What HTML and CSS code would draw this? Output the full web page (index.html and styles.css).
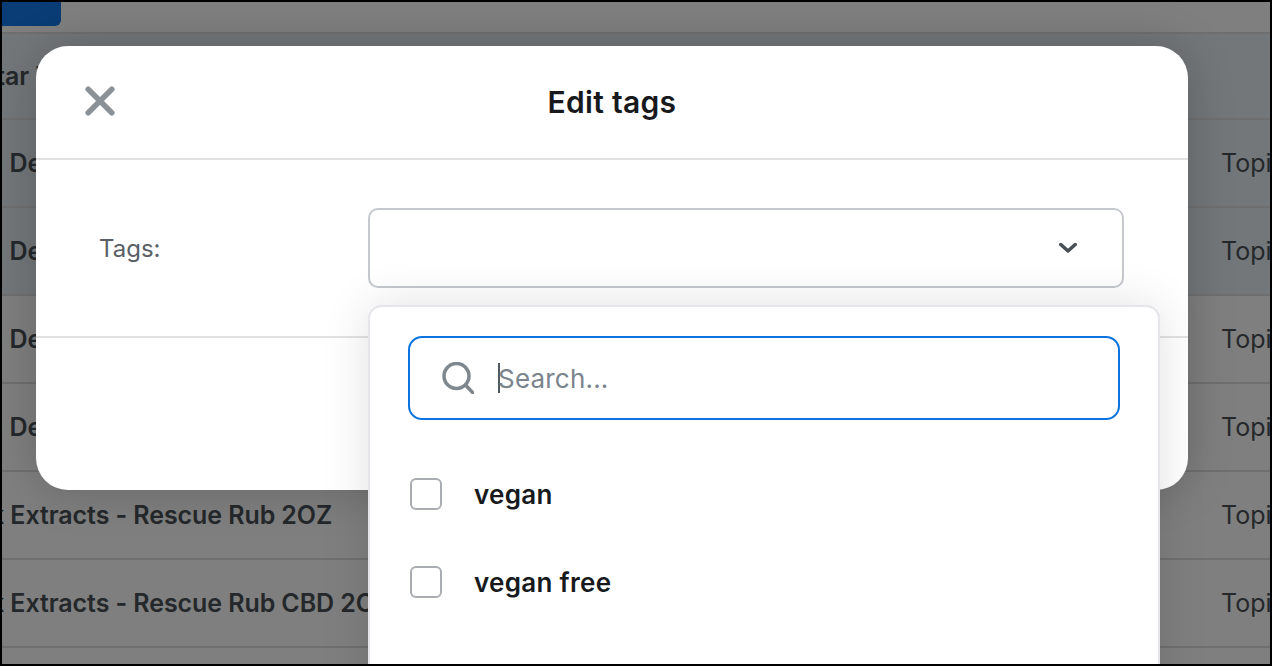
FILE: index.html
```html
<!DOCTYPE html>
<html lang="en">
<head>
<meta charset="utf-8">
<title>Edit tags</title>
<link rel="stylesheet" href="styles.css">
</head>
<body>
<div class="frame">
  <main class="page">
    <div class="toolbar"><button class="primary" type="button"></button></div>
    <div class="rows">
      <div class="row row-first tinted"><span class="name name-a">Star Tincture</span><span class="cat"></span></div>
      <div class="row tinted"><span class="name name-b">n Delta Gummies</span><span class="cat">Topical</span></div>
      <div class="row tinted"><span class="name name-b">n Delta Gummies</span><span class="cat">Topical</span></div>
      <div class="row"><span class="name name-b">n Delta Gummies</span><span class="cat">Topical</span></div>
      <div class="row"><span class="name name-b">n Delta Gummies</span><span class="cat">Topical</span></div>
      <div class="row"><span class="name name-c">k Extracts - Rescue Rub 2OZ</span><span class="cat">Topical</span></div>
      <div class="row"><span class="name name-c">k Extracts - Rescue Rub CBD 2OZ</span><span class="cat">Topical</span></div>
    </div>
  </main>
  <div class="backdrop"></div>
  <section class="modal">
    <header class="modal-head">
      <svg class="close" viewBox="0 0 32 32" width="32" height="32" aria-hidden="true"><path d="M4.200 4.200 L27.800 27.800 M27.800 4.200 L4.200 27.800"/></svg>
      <h1>Edit tags</h1>
    </header>
    <div class="modal-body">
      <label class="tags-label">Tags:</label>
      <div class="select">
        <svg class="chev" viewBox="0 0 18 12" width="18" height="12" aria-hidden="true"><path d="M1.800 2.500 L9 9 L16.200 2.500"/></svg>
      </div>
    </div>
    <div class="modal-foot"></div>
    <div class="popover">
      <div class="search">
        <svg class="mag" viewBox="0 0 32 32" width="32" height="32" aria-hidden="true"><circle cx="14.500" cy="14" r="12.500"/><path d="M24 23.500 L31 31"/></svg>
        <span class="caret"></span>
        <span class="placeholder">Search...</span>
      </div>
      <div class="opt"><span class="box"></span><span>vegan</span></div>
      <div class="opt"><span class="box"></span><span>vegan free</span></div>
    </div>
  </section>
</div>
</body>
</html>
```
FILE: styles.css
```css
* { box-sizing: border-box; }
html, body { margin: 0; height: 100%; background: #000; }
body { font-family: Inter, "Noto Sans", sans-serif; }
.frame {
  position: relative;
  width: 1272px;
  height: 666px;
  border: 2px solid #000;
  overflow: hidden;
  background: #fff;
}
.toolbar { height: 32px; border-bottom: 2px solid #dfdfdf; }
.primary {
  display: block;
  width: 59px;
  height: 24px;
  padding: 0;
  border: 0;
  border-radius: 0 0 6px 0;
  background: #1479ea;
}
.row {
  display: flex;
  align-items: center;
  justify-content: space-between;
  height: 88px;
  border-bottom: 2px solid #dfdfdf;
  font-size: 25px;
  color: #4a5055;
  white-space: nowrap;
  overflow: hidden;
}
.row-first { height: 86px; }
.tinted { background: #e7eef4; }
.name { font-weight: 600; letter-spacing: -.08px; flex: none; }
.name-a { margin-left: -22px; }
.name-b { margin-left: -14px; }
.name-c { margin-left: -12px; }
.cat { flex: none; width: 49px; overflow: hidden; }
.backdrop { position: absolute; inset: 0; background: rgba(0, 0, 0, .5); }
.modal {
  position: absolute;
  left: 34px;
  top: 44px;
  width: 1152px;
  height: 444px;
  background: #fff;
  border-radius: 32px;
  box-shadow: 0 0 48px rgba(0, 0, 0, .2);
  display: flex;
  flex-direction: column;
}
.modal-head {
  position: relative;
  display: flex;
  align-items: center;
  justify-content: center;
  height: 114px;
  border-bottom: 2px solid #e2e2e2;
}
.modal-head h1 { margin: 0; font-size: 30px; font-weight: 600; letter-spacing: .3px; color: #17191c; }
.close { position: absolute; left: 48px; top: 39px; }
.close path { fill: none; stroke: #8a9197; stroke-width: 5.500; stroke-linecap: round; }
.modal-body {
  display: flex;
  align-items: center;
  height: 178px;
  padding: 0 64px 0 63px;
  border-bottom: 2px solid #e2e2e2;
}
.tags-label { width: 269px; font-size: 24px; color: #5a6066; }
.select {
  flex: 1;
  height: 80px;
  border: 2px solid #c5c9cd;
  border-radius: 10px;
  display: flex;
  align-items: center;
  justify-content: flex-end;
  padding-right: 45px;
}
.chev path { fill: none; stroke: #484f55; stroke-width: 3.500; stroke-linecap: round; stroke-linejoin: round; }
.popover {
  position: absolute;
  left: 332px;
  top: 259px;
  width: 792px;
  height: 420px;
  padding: 29px 38px;
  background: #fff;
  border: 2px solid #e5e5ea;
  border-radius: 14px;
  box-shadow: 0 0 48px rgba(0, 0, 0, .12);
}
.search {
  display: flex;
  align-items: center;
  height: 84px;
  padding-left: 32px;
  border: 2px solid #0b74de;
  border-radius: 14px;
}
.mag { flex: none; }
.mag circle, .mag path { fill: none; stroke: #7f878e; stroke-width: 3.500; stroke-linecap: round; }
.caret { width: 2px; height: 30px; margin-left: 24px; background: #4f5a63; }
.placeholder { font-size: 26px; letter-spacing: .2px; color: #7a848c; margin-left: -2px; }
.opt {
  display: flex;
  align-items: center;
  gap: 32px;
  height: 88px;
  padding-left: 2px;
  font-size: 26px;
  letter-spacing: .3px;
  font-weight: 600;
  color: #17191c;
}
.search + .opt { margin-top: 30px; }
.box {
  flex: none;
  width: 32px;
  height: 32px;
  border: 2px solid #a9adb1;
  border-radius: 6px;
}
```
